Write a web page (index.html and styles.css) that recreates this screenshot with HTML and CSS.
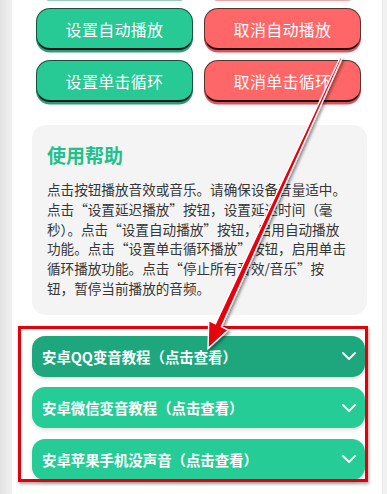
FILE: index.html
```html
<!DOCTYPE html>
<html lang="zh-CN">

<head>
    <meta charset="UTF-8">
    <meta name="viewport" content="width=device-width, initial-scale=1.0">
    <title>音效播放</title>
    <link rel="stylesheet" href="styles.css">
</head>

<body>

    <div class="page">
        <!-- Control buttons (first row is scrolled out of view) -->
        <div class="btn-grid">
            <div class="btn green"></div>
            <div class="btn red"></div>
            <div class="btn green">设置自动播放</div>
            <div class="btn red">取消自动播放</div>
            <div class="btn green">设置单击循环</div>
            <div class="btn red">取消单击循环</div>
        </div>

        <!-- Help card -->
        <div class="help">
            <h2 class="help-title">使用帮助</h2>
            <p class="help-text">点击按钮播放音效或音乐。请确保设备音量适中。点击“设置延迟播放”按钮，设置延迟时间（毫秒）。点击“设置自动播放”按钮，启用自动播放功能。点击“设置单击循环播放”按钮，启用单击循环播放功能。点击“停止所有音效/音乐”按钮，暂停当前播放的音频。</p>
        </div>

        <!-- Tutorials -->
        <div class="faq">
            <div class="faq-item active">
                <span>安卓QQ变音教程（点击查看）</span>
                <svg class="chev" width="16" height="10" viewBox="0 0 16 10"><path d="M2 2 L8 8 L14 2" fill="none" stroke="#fff" stroke-width="1.8" stroke-linecap="round" stroke-linejoin="round"/></svg>
            </div>
            <div class="faq-item">
                <span>安卓微信变音教程（点击查看）</span>
                <svg class="chev" width="16" height="10" viewBox="0 0 16 10"><path d="M2 2 L8 8 L14 2" fill="none" stroke="#fff" stroke-width="1.8" stroke-linecap="round" stroke-linejoin="round"/></svg>
            </div>
            <div class="faq-item">
                <span>安卓苹果手机没声音（点击查看）</span>
                <svg class="chev" width="16" height="10" viewBox="0 0 16 10"><path d="M2 2 L8 8 L14 2" fill="none" stroke="#fff" stroke-width="1.8" stroke-linecap="round" stroke-linejoin="round"/></svg>
            </div>
        </div>
    </div>

    <!-- Annotation: red frame + arrow -->
    <div class="mark-box"></div>
    <svg class="mark-arrow" width="387" height="494" viewBox="0 0 387 494">
        <defs>
            <filter id="shadow" x="-20%" y="-20%" width="140%" height="140%">
                <feDropShadow dx="1.5" dy="2" stdDeviation="1.5" flood-color="#000" flood-opacity="0.45"/>
            </filter>
        </defs>
        <polygon points="340.2,57.4 342.0,58.3 221.4,326.6 228.2,330.0 208,348.5 208.8,320.6 215.4,323.8"
            fill="#e8000b" stroke="#fff" stroke-width="1.4" stroke-linejoin="miter" filter="url(#shadow)"/>
    </svg>

</body>

</html>
```

FILE: styles.css
```css
body {
    margin: 0;
    padding: 0;
    background: linear-gradient(to right, #e2e2e2, #f1f1f1 12px);
    font-family: "Noto Sans CJK SC", "Noto Sans", sans-serif;
    height: 494px;
    overflow: hidden;
}

.page {
    margin-left: 12px;
    width: 371px;
    height: 494px;
    background-color: #fff;
    border-right: 1px solid #e6e6e6;
    box-sizing: border-box;
    overflow: hidden;
}

/* Buttons */
.btn-grid {
    display: grid;
    grid-template-columns: 157px 157px;
    column-gap: 11px;
    row-gap: 10px;
    margin-top: -44px;
    padding-left: 24px;
}

.btn {
    height: 42px;
    box-sizing: border-box;
    border: 1.5px solid rgba(20, 30, 28, 0.7);
    border-bottom: 2.5px solid #161616;
    border-radius: 14px;
    color: #fff;
    font-size: 16px;
    display: flex;
    justify-content: center;
    align-items: center;
    letter-spacing: 0.3px;
}

.green {
    background-color: #27c994;
    box-shadow: 0 2.5px 0 #2a9c78;
}

.red {
    background-color: #ff6667;
    box-shadow: 0 2.5px 0 #e2505a;
}

/* Help card */
.help {
    margin: 23px 0 0 20px;
    width: 335px;
    box-sizing: border-box;
    padding: 16px 18px 16px 15px;
    background-color: #f3f4f3;
    border-radius: 14px;
}

.help-title {
    margin: 0;
    font-size: 19px;
    line-height: 28px;
    font-weight: bold;
    color: #22c08c;
}

.help-text {
    margin: 11px 0 0;
    font-size: 13.6px;
    line-height: 19.8px;
    color: #363636;
}

/* Tutorial list */
.faq {
    margin: 21px 0 0 20px;
    width: 333px;
    display: flex;
    flex-direction: column;
    gap: 10.5px;
}

.faq-item {
    height: 41px;
    border-radius: 13px;
    background-color: #25cc96;
    color: #fff;
    font-size: 14.4px;
    font-weight: bold;
    display: flex;
    align-items: center;
    justify-content: space-between;
    padding: 0 8px 0 10px;
    box-shadow: 0 2px 4px rgba(0, 0, 0, 0.12);
}

.faq-item.active {
    background-color: #1ea67c;
}

.chev {
    display: block;
}

/* Annotation overlay */
.mark-box {
    position: absolute;
    left: 18px;
    top: 326px;
    width: 350px;
    height: 156px;
    box-sizing: border-box;
    border: 3px solid #e4000a;
    box-shadow: 1px 2px 3px rgba(0, 0, 0, 0.35);
}

.mark-arrow {
    position: absolute;
    left: 0;
    top: 0;
    pointer-events: none;
}
```
